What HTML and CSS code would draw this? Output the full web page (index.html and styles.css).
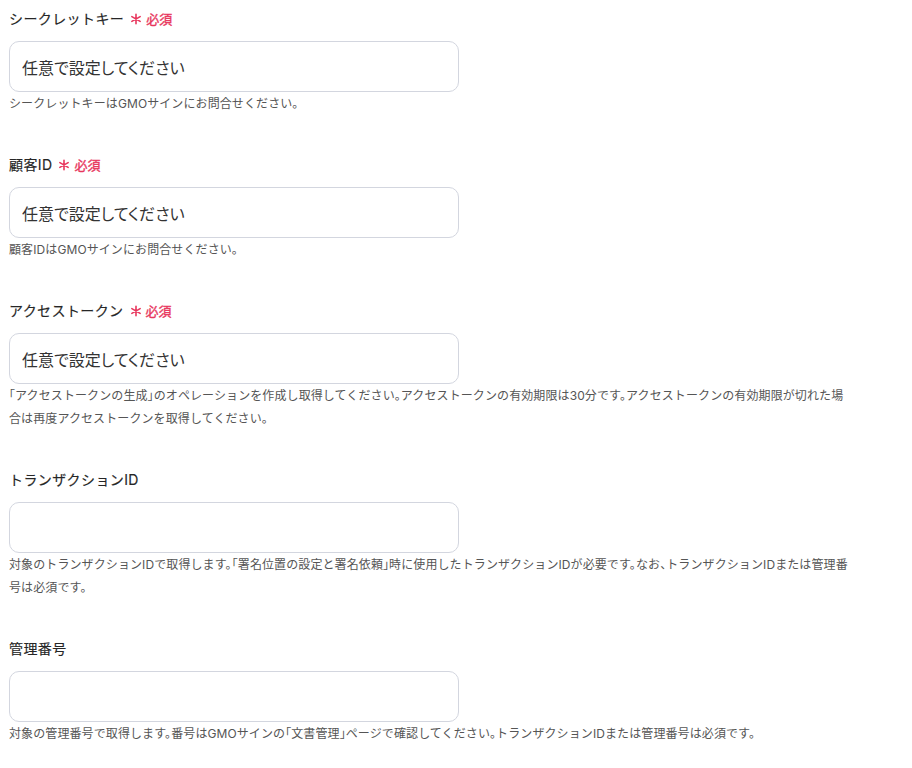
FILE: index.html
```html
<!DOCTYPE html>
<html lang="ja">
<head>
    <meta charset="UTF-8">
    <meta name="viewport" content="width=device-width, initial-scale=1.0">
    <title>GMOサイン 設定</title>
    <link rel="stylesheet" href="styles.css">
</head>
<body>
    <form class="settings-form">
        <div class="field">
            <label class="field-label">シークレットキー
                <span class="required">
                    <svg class="req-mark" viewBox="0 0 12 12"><path d="M6 1.2v9.6M1.85 3.6l8.3 4.8M1.85 8.4l8.3-4.8"/></svg>必須
                </span>
            </label>
            <input class="field-input" type="text" value="任意で設定してください">
            <p class="field-help">シークレットキーはGMOサインにお問合せください。</p>
        </div>

        <div class="field">
            <label class="field-label">顧客ID
                <span class="required">
                    <svg class="req-mark" viewBox="0 0 12 12"><path d="M6 1.2v9.6M1.85 3.6l8.3 4.8M1.85 8.4l8.3-4.8"/></svg>必須
                </span>
            </label>
            <input class="field-input" type="text" value="任意で設定してください">
            <p class="field-help">顧客IDはGMOサインにお問合せください。</p>
        </div>

        <div class="field">
            <label class="field-label">アクセストークン
                <span class="required">
                    <svg class="req-mark" viewBox="0 0 12 12"><path d="M6 1.2v9.6M1.85 3.6l8.3 4.8M1.85 8.4l8.3-4.8"/></svg>必須
                </span>
            </label>
            <input class="field-input" type="text" value="任意で設定してください">
            <p class="field-help">「アクセストークンの生成」のオペレーションを作成し取得してください。アクセストークンの有効期限は30分です。アクセストークンの有効期限が切れた場合は再度アクセストークンを取得してください。</p>
        </div>

        <div class="field">
            <label class="field-label">トランザクションID</label>
            <input class="field-input" type="text">
            <p class="field-help">対象のトランザクションIDで取得します。「署名位置の設定と署名依頼」時に使用したトランザクションIDが必要です。なお、トランザクションIDまたは管理番号は必須です。</p>
        </div>

        <div class="field">
            <label class="field-label">管理番号</label>
            <input class="field-input" type="text">
            <p class="field-help">対象の管理番号で取得します。番号はGMOサインの「文書管理」ページで確認してください。トランザクションIDまたは管理番号は必須です。</p>
        </div>
    </form>
</body>
</html>
```

FILE: styles.css
```css
body {
    margin: 0;
    padding: 8px 9px;
    font-family: Inter, "Noto Sans CJK JP", sans-serif;
    color: #333;
    background: #fff;
}
.settings-form {
    width: 845px;
}
.field {
    margin-bottom: 39px;
}
.field-label {
    display: flex;
    align-items: center;
    gap: 6px;
    font-size: 14px;
    font-weight: 400;
    line-height: 22px;
    letter-spacing: 0.4px;
    color: #262626;
    -webkit-text-stroke: 0.15px #262626;
}
.required {
    display: inline-flex;
    align-items: center;
    gap: 4px;
    font-size: 13px;
    font-weight: 400;
    letter-spacing: 0;
    color: #e8365d;
    -webkit-text-stroke: 0.35px #e8365d;
}
.req-mark {
    width: 12px;
    height: 12px;
    fill: none;
    stroke: #e8365d;
    stroke-width: 1.6;
    stroke-linecap: round;
}
.field-input {
    display: block;
    box-sizing: border-box;
    width: 450px;
    height: 51px;
    margin-top: 11px;
    padding: 0 12px;
    border: 1px solid #d3d6df;
    border-radius: 10px;
    font-family: inherit;
    font-feature-settings: "palt";
    font-size: 16px;
    color: #333;
    background: #fff;
    outline: none;
}
.field-help {
    margin: 0;
    font-size: 12px;
    line-height: 23px;
    letter-spacing: 0.1px;
    font-feature-settings: "halt";
    color: #555;
}
```
